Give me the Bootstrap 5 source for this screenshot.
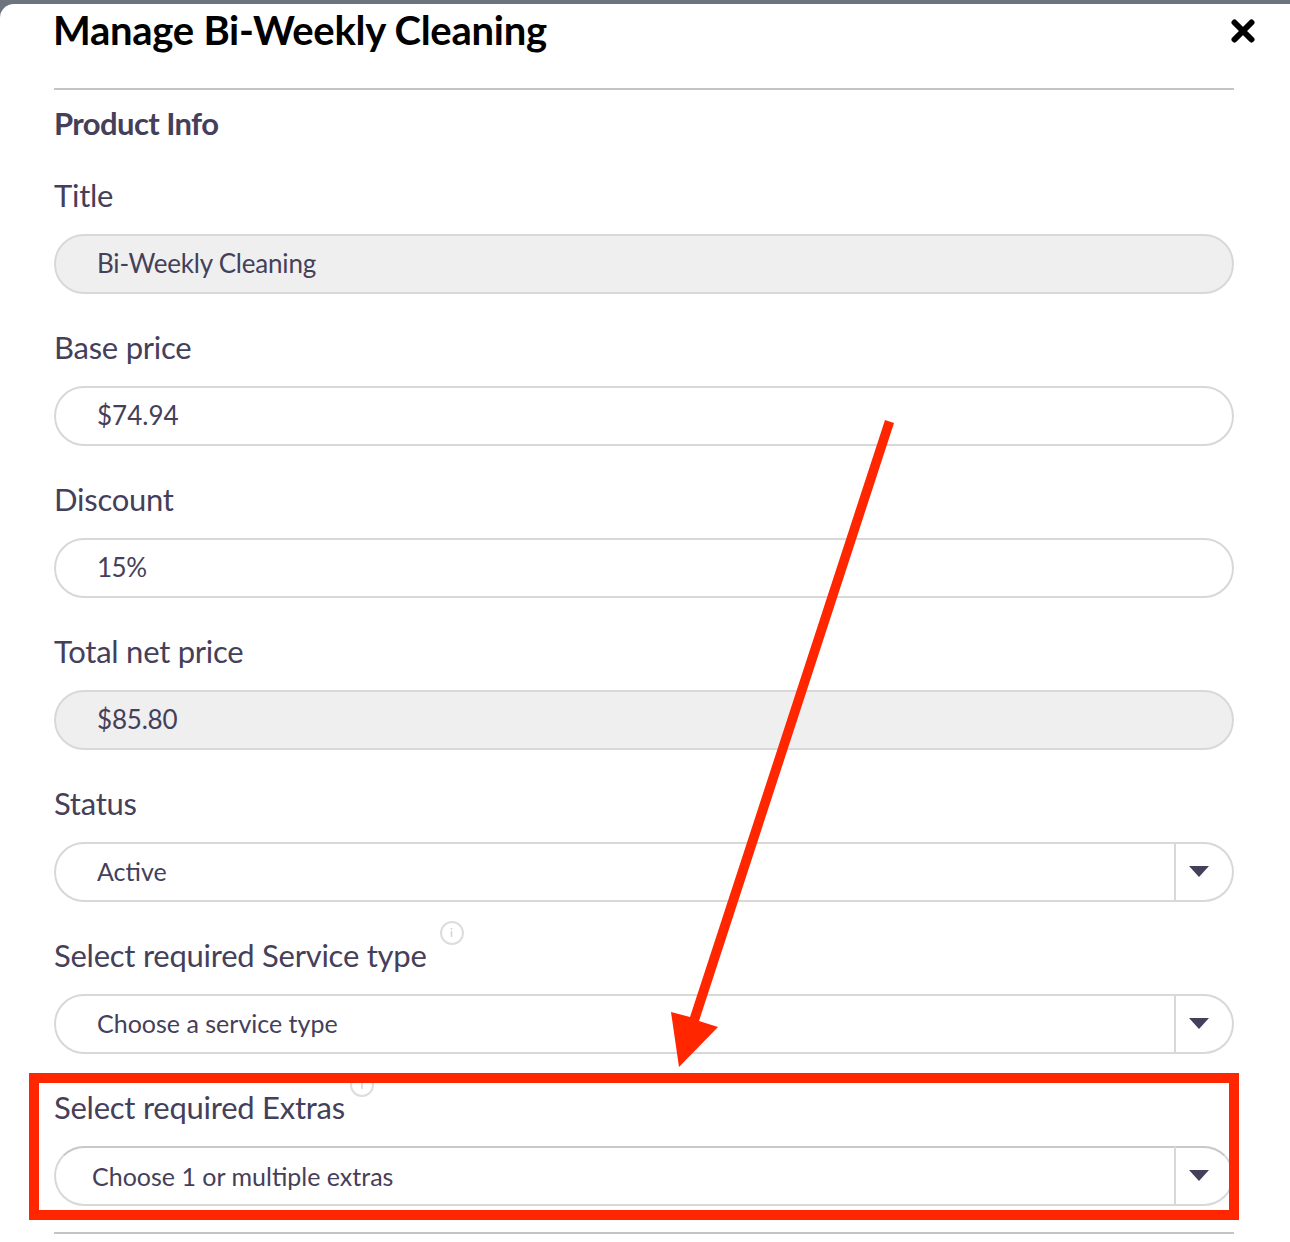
<!DOCTYPE html>
<html>
<head>
    <meta charset="utf-8" />
    <meta name="viewport" content="width=device-width, initial-scale=1.0" />
    <title>Manage Bi-Weekly Cleaning</title>
    <link href="https://cdn.jsdelivr.net/npm/bootstrap@5.3.0/dist/css/bootstrap.min.css" rel="stylesheet">
    <style>
        body { background: #6c757d; font-family: "Lato", sans-serif; color: #45405a; height: 1242px; overflow: hidden; }
        .sheet { background: #fff; margin-top: 4px; height: 1238px; border-top-left-radius: 14px; padding: 0 56px 0 54px; position: relative; }
        .sheet-head { height: 84px; }
        .sheet-title { font-size: 40px; font-weight: 700; color: #000; letter-spacing: -.27px; line-height: 52px; margin: 0 0 0 -1px; }
        .close-x { position: absolute; top: 15px; right: 35px; width: 24px; height: 24px; background: none; border: 0; padding: 0; line-height: 0; }
        .rule { height: 2px; background: #c4c4c4; opacity: 1; border: 0; margin: 0; }
        .section-title { font-size: 31px; font-weight: 700; letter-spacing: -.6px; line-height: 40px; margin: 13px 0 33px 0; }
        .field { height: 152px; }
        .field .form-label { font-size: 31px; line-height: 38px; letter-spacing: -.25px; margin: 0 0 20px 0; display: flex; height: 38px; }
        .pill { height: 60px; border: 2px solid #d8d8d8; border-radius: 30px; font-size: 26px; color: #45405a; padding: 0 41px 3px; box-shadow: none; background: #fff; }
        .pill[readonly] { background: #fff; }
        .pill.locked, .pill.locked[readonly] { background: #efefef; letter-spacing: -.2px; }
        .pill:focus { border-color: #d8d8d8; box-shadow: none; color: #45405a; }
        .input-group > .pill { border-right: 2px solid #d8d8d8; border-radius: 30px 0 0 30px; }
        .caret-box { width: 59px; height: 60px; justify-content: center; background: #fff; border: 2px solid #d8d8d8; border-left: 0; border-radius: 0 30px 30px 0 !important; padding: 0 9px 2px 0; }
        .pill.choice { font-size: 25px; }
        .pill.short { letter-spacing: -.5px; }
        .info-dot { width: 24px; height: 24px; border: 2px solid #ddd; border-radius: 50%; color: #c8c8c8; font-size: 12px; line-height: 20px; text-align: center; margin-left: 13px; margin-top: -15px; flex: none; letter-spacing: 0; }
        .info-dot.second { margin-left: 5px; }
        .field.extras { height: 144px; }
        .extras .pill { padding-left: 36px; padding-bottom: 1px; }
        .extras .pill, .extras .caret-box { border-top-color: #c8c8c8; }
        .markup { position: absolute; left: 0; top: 0; pointer-events: none; }
    </style>
</head>
<body>
    <div class="sheet">
        <div class="sheet-head">
            <h1 class="sheet-title">Manage Bi-Weekly Cleaning</h1>
            <button class="close-x" type="button" aria-label="Close">
                <svg width="24" height="24" viewBox="0 0 24 24"><path d="M3.5 3.5 20.5 20.5M20.5 3.5 3.5 20.5" stroke="#000" stroke-width="6" stroke-linecap="round" /></svg>
            </button>
        </div>
        <hr class="rule" />
        <div class="section-title">Product Info</div>

        <div class="field">
            <label class="form-label">Title</label>
            <input class="form-control pill locked" value="Bi-Weekly Cleaning" readonly />
        </div>
        <div class="field">
            <label class="form-label">Base price</label>
            <input class="form-control pill" value="$74.94" readonly />
        </div>
        <div class="field">
            <label class="form-label">Discount</label>
            <input class="form-control pill short" value="15%" readonly />
        </div>
        <div class="field">
            <label class="form-label">Total net price</label>
            <input class="form-control pill locked" value="$85.80" readonly />
        </div>
        <div class="field">
            <label class="form-label">Status</label>
            <div class="input-group">
                <input class="form-control pill choice" value="Active" readonly />
                <span class="input-group-text caret-box"><svg width="20" height="11" viewBox="0 0 20 11"><path d="M0 0H20L10 11Z" fill="#45405a" /></svg></span>
            </div>
        </div>
        <div class="field">
            <label class="form-label">Select required Service type<span class="info-dot">i</span></label>
            <div class="input-group">
                <input class="form-control pill choice" value="Choose a service type" readonly />
                <span class="input-group-text caret-box"><svg width="20" height="11" viewBox="0 0 20 11"><path d="M0 0H20L10 11Z" fill="#45405a" /></svg></span>
            </div>
        </div>
        <div class="field extras">
            <label class="form-label">Select required Extras<span class="info-dot second">i</span></label>
            <div class="input-group">
                <input class="form-control pill choice" value="Choose 1 or multiple extras" readonly />
                <span class="input-group-text caret-box"><svg width="20" height="11" viewBox="0 0 20 11"><path d="M0 0H20L10 11Z" fill="#45405a" /></svg></span>
            </div>
        </div>
        <hr class="rule" />
    </div>

    <!-- red annotation on top of the form -->
    <svg class="markup" width="1290" height="1242" viewBox="0 0 1290 1242">
        <path d="M885 420 894 423 699 1021 718 1027 679 1067 671 1012 690 1017Z" fill="#ff2600" />
        <rect x="34" y="1078" width="1200" height="137" fill="none" stroke="#ff2600" stroke-width="10" />
    </svg>

    <script src="https://cdn.jsdelivr.net/npm/bootstrap@5.3.0/dist/js/bootstrap.bundle.min.js"></script>
</body>
</html>
